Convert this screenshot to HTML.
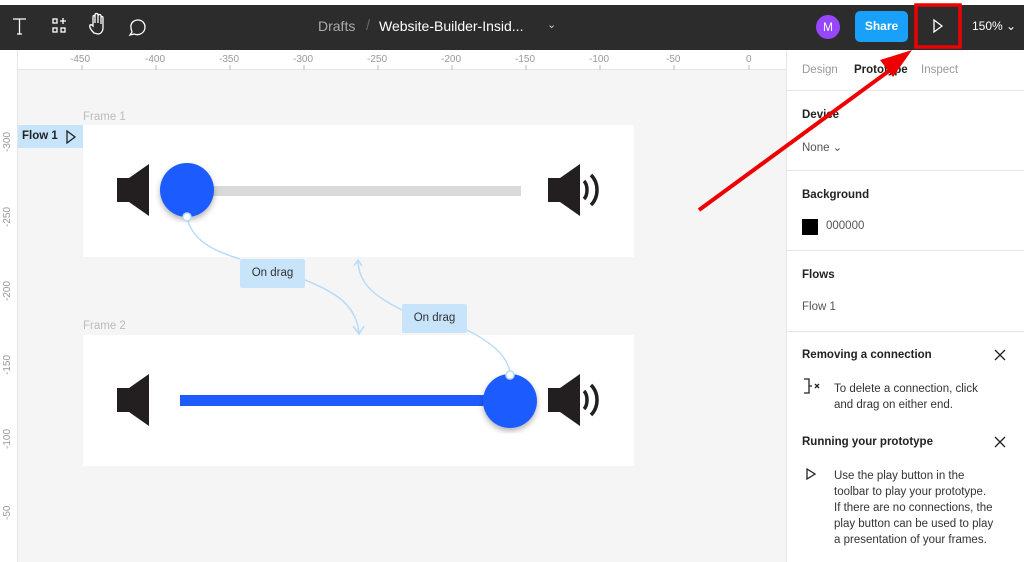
<!DOCTYPE html>
<html><head><meta charset="utf-8"><style>
*{margin:0;padding:0;box-sizing:border-box}
body{width:1024px;height:562px;overflow:hidden;background:#f5f5f5;font-family:"Liberation Sans",sans-serif;position:relative}
.a{position:absolute}
.t{position:absolute;font-size:11.5px;color:#333;white-space:nowrap}
.b{font-weight:bold;color:#222}
.sep{position:absolute;left:786px;width:238px;height:1px;background:#e6e6e6}
</style></head><body>
<div class="a" style="left:0;top:0;width:1024px;height:5px;background:#fff"></div>
<div class="a" style="left:0;top:5px;width:1024px;height:45px;background:#2c2c2c"></div>
<div class="a" style="left:0;top:50px;width:786px;height:20px;background:#fff;border-bottom:1px solid #e6e6e6"></div>
<div class="a" style="left:0;top:50px;width:18px;height:512px;background:#fff;border-right:1px solid #e6e6e6"></div>
<div class="a" style="left:786px;top:50px;width:238px;height:512px;background:#fff;border-left:1px solid #e6e6e6"></div>
<div class="sep" style="top:90px"></div><div class="sep" style="top:170px"></div><div class="sep" style="top:250px"></div><div class="sep" style="top:331px"></div>
<div class="t" style="left:802px;top:64px;color:#999">Design</div>
<div class="t b" style="left:854px;top:64px">Prototype</div>
<div class="t" style="left:921px;top:64px;color:#999">Inspect</div>
<div class="t b" style="left:802px;top:109px">Device</div>
<div class="t" style="left:802px;top:140px;color:#555">None ⌄</div>
<div class="t b" style="left:802px;top:189px">Background</div>
<div class="a" style="left:802px;top:219px;width:16px;height:16px;background:#000"></div>
<div class="t" style="left:826px;top:220px;color:#555">000000</div>
<div class="t b" style="left:802px;top:269px">Flows</div>
<div class="t" style="left:802px;top:301px;color:#555">Flow 1</div>
<div class="t b" style="left:802px;top:349px">Removing a connection</div>
<div class="t" style="left:834px;top:381px;line-height:16px">To delete a connection, click<br>and drag on either end.</div>
<div class="t b" style="left:802px;top:436px">Running your prototype</div>
<div class="t" style="left:834px;top:468px;line-height:16px">Use the play button in the<br>toolbar to play your prototype.<br>If there are no connections, the<br>play button can be used to play<br>a presentation of your frames.</div>
<div class="t" style="left:318px;top:18px;font-size:14px;color:#aaa">Drafts</div>
<div class="t" style="left:366px;top:17px;font-size:15px;color:#666">/</div>
<div class="t" style="left:379px;top:18px;font-size:14px;color:#fff">Website-Builder-Insid...</div>
<div class="t" style="left:547px;top:18px;font-size:11px;color:#ccc">⌄</div>
<div class="a" style="left:816px;top:15px;width:24px;height:24px;border-radius:50%;background:#9747ff;color:#fff;font-size:12px;text-align:center;line-height:24px">M</div>
<div class="a" style="left:855px;top:11px;width:53px;height:31px;border-radius:5px;background:#18a0fb;color:#fff;font-size:12px;font-weight:bold;text-align:center;line-height:31px">Share</div>
<div class="t" style="left:972px;top:19px;font-size:12px;color:#fff">150% ⌄</div>
<div class="t" style="left:83px;top:111px;color:#bbb">Frame 1</div>
<div class="t" style="left:83px;top:320px;color:#bbb">Frame 2</div>
<div class="a" style="left:83px;top:125px;width:551px;height:132px;background:#fff"></div>
<div class="a" style="left:83px;top:335px;width:551px;height:131px;background:#fff"></div>
<div class="a" style="left:18px;top:125px;width:65px;height:23px;background:#c7e4fb"></div>
<div class="t" style="left:22px;top:130px;font-size:11.5px;color:#222;font-weight:bold">Flow 1</div>
<div class="a" style="left:240px;top:259px;width:65px;height:29px;background:#c7e4fb;border-radius:2px;font-size:11.5px;color:#333;text-align:center;line-height:29px">On drag</div>
<div class="a" style="left:402px;top:304px;width:65px;height:29px;background:#c7e4fb;border-radius:2px;font-size:11.5px;color:#333;text-align:center;line-height:29px">On drag</div>
<svg class="a" style="left:0;top:0" width="1024" height="562">
<defs><filter id="sh"><feDropShadow dx="0" dy="3" stdDeviation="3" flood-opacity="0.3"/></filter></defs>
<g fill="#999" font-size="10" font-family="Liberation Sans">
<text x="70" y="62">-450</text><text x="145" y="62">-400</text><text x="219" y="62">-350</text><text x="293" y="62">-300</text><text x="367" y="62">-250</text><text x="441" y="62">-200</text><text x="515" y="62">-150</text><text x="589" y="62">-100</text><text x="666" y="62">-50</text><text x="746" y="62">0</text>
<g transform="rotate(-90)"><text x="-152" y="10">-300</text><text x="-227" y="10">-250</text><text x="-301" y="10">-200</text><text x="-375" y="10">-150</text><text x="-449" y="10">-100</text><text x="-520" y="10">-50</text></g>
</g>
<g stroke="#bbb" stroke-width="1">
<path d="M82 65v5M156 65v5M230 65v5M304 65v5M378 65v5M452 65v5M526 65v5M600 65v5M674 65v5M749 65v5"/>
</g>
<g stroke="#fff" fill="none" stroke-width="1.3">
<path d="M13 19h13M19.5 19v15M17 34h5"/>
<rect x="53" y="19" width="4" height="4"/><rect x="53" y="28" width="4" height="4"/><rect x="61" y="28" width="4" height="4"/><path d="M63 18v6M60 21h6"/>
<path d="M94 33c-3-3-5-6-4-8 1-1 2 0 3 1v-9c0-2 2-2 2 0v6-8c0-2 3-2 3 0v8-7c0-2 3-2 3 0v8-6c0-2 2-2 2 0v10c0 3-2 6-5 6z"/>
<path d="M132 32l-2 3 4-1c5 2 11-1 11-7 0-4-3-7-7-7s-8 3-7 8c0 2 1 3 1 4z"/>
<path d="M934 20l8 6-8 6z"/>
</g>
<g stroke="#222" fill="none" stroke-width="1.3">
<path d="M67 131l8 6-8 6z"/>
<path d="M807 469l8 5-8 5z"/>
<path d="M995 350l10 10M1005 350l-10 10M995 437l10 10M1005 437l-10 10"/>
<path d="M804 379h5v14h-5M809 386h3M815 384l4 4M819 384l-4 4"/>
</g>
<g stroke="#b8dcf8" fill="none" stroke-width="1.5">
<path d="M187 217c5 25 30 35 53 42"/><path d="M305 280c30 12 52 25 54 54"/>
<path d="M354 266l4-6 4 6"/><path d="M358 260c0 25 20 38 44 50"/>
<path d="M467 330c30 15 42 30 43 44"/>
<path d="M353 326l6 8 5-8"/>
</g>
<path d="M117 178h12l20-14v52l-20-14h-12z" fill="#231f20"/>
<rect x="200" y="186" width="321" height="10" fill="#d9d9d9"/>
<circle cx="187" cy="190" r="27" fill="#1e5bff" filter="url(#sh)"/>
<circle cx="187" cy="217" r="4" fill="#fff" stroke="#b8dcf8" stroke-width="1.5"/>
<path d="M548 178h12l20-14v52l-20-14h-12z" fill="#231f20"/>
<path d="M584 181c4 4 4 14 0 18M591 175c8 8 8 22 0 30" stroke="#231f20" stroke-width="3.5" fill="none"/>
<path d="M117 388h12l20-14v52l-20-14h-12z" fill="#231f20"/>
<rect x="180" y="395" width="320" height="11" fill="#1e5bff"/>
<circle cx="510" cy="401" r="27" fill="#1e5bff" filter="url(#sh)"/>
<circle cx="510" cy="375" r="4" fill="#fff" stroke="#b8dcf8" stroke-width="1.5"/>
<path d="M548 388h12l20-14v52l-20-14h-12z" fill="#231f20"/>
<path d="M584 391c4 4 4 14 0 18M591 385c8 8 8 22 0 30" stroke="#231f20" stroke-width="3.5" fill="none"/>
<rect x="916" y="5" width="44" height="42" fill="none" stroke="#e00" stroke-width="3.5"/>
<path d="M699 210L893 68" stroke="#e00" stroke-width="4"/>
<path d="M912 50L880 60l13 17z" fill="#e00"/>
</svg>
</body></html>
